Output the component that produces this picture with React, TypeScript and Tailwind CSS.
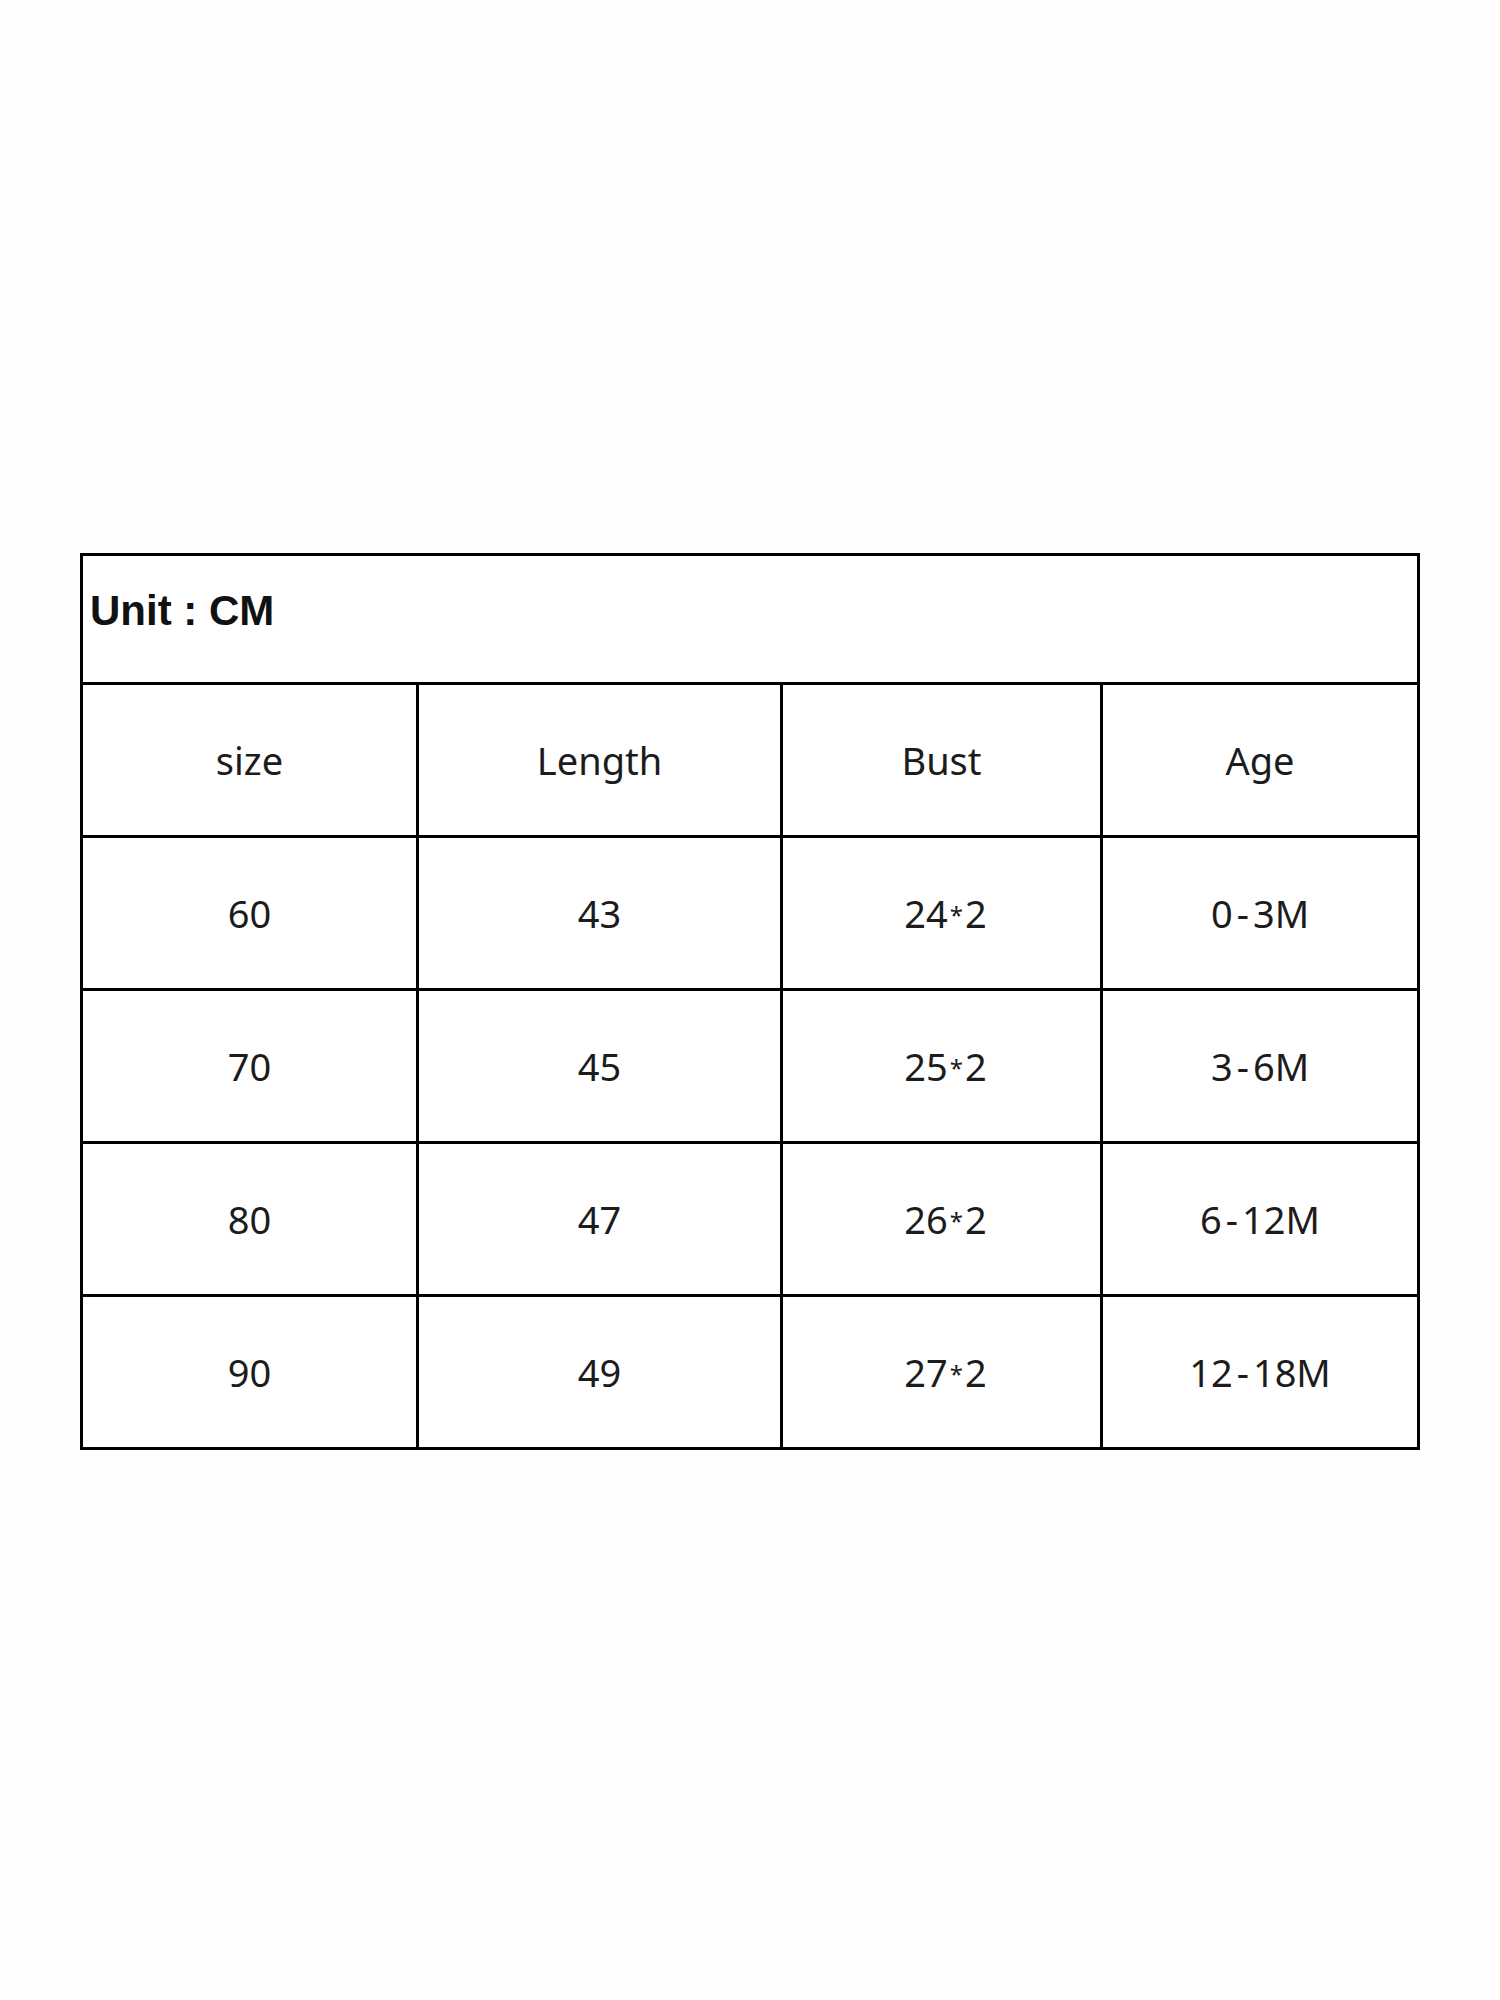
const rows = [
  ["60", "43", "24", "0-3M"],
  ["70", "45", "25", "3-6M"],
  ["80", "47", "26", "6-12M"],
  ["90", "49", "27", "12-18M"],
];

const Cell = ({ children, first }: { children: React.ReactNode; first?: boolean }) => (
  <div
    className={
      first
        ? "flex items-center justify-center"
        : "flex items-center justify-center border-l-[3px] border-black"
    }
  >
    {children}
  </div>
);

// age like "6-12M" gets a bit of air round the dash, as in the source sheet
const Age = ({ v }: { v: string }) => {
  const [a, b] = v.split("-");
  return (
    <span>
      {a}
      <span className="mx-[4px]">-</span>
      {b}
    </span>
  );
};

export default function App() {
  return (
    <div
      className="min-h-[2000px] w-[1500px] bg-[#fefefc] pt-[553px] pl-[80px] text-[#1c1c1c]"
      style={{ fontFamily: '"Noto Sans", "Liberation Sans", sans-serif' }}
    >
      <div className="w-[1340px] border-[3px] border-black bg-white">
        {/* unit header */}
        <div className="flex h-[126px] items-center pl-[7px] pb-[18px]">
          <span
            className="text-[42px] font-bold text-[#111]"
            style={{ fontFamily: '"Liberation Sans", sans-serif' }}
          >
            Unit : CM
          </span>
        </div>

        <div className="grid h-[153px] grid-cols-[333px_364px_320px_317px] border-t-[3px] border-black text-[38px]">
          <Cell first>size</Cell>
          <Cell>Length</Cell>
          <Cell>Bust</Cell>
          <Cell>Age</Cell>
        </div>

        {rows.map((r) => (
          <div
            key={r[0]}
            className="grid h-[153px] grid-cols-[333px_364px_320px_317px] border-t-[3px] border-black text-[38px]"
          >
            <Cell first>{r[0]}</Cell>
            <Cell>{r[1]}</Cell>
            <Cell>
              <span className="pl-[8px]">
                {r[2]}
                <span className="relative -top-[4px] mx-[2px] text-[24px]">*</span>2
              </span>
            </Cell>
            <Cell>
              <Age v={r[3]} />
            </Cell>
          </div>
        ))}
      </div>
    </div>
  );
}
